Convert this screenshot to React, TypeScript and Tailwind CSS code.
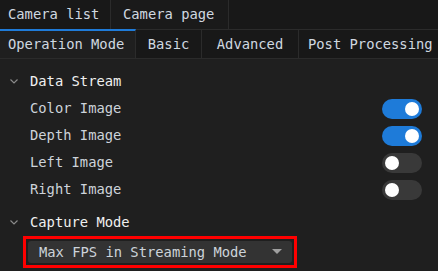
import type { JSX } from "react";

const font = { fontFamily: '"DejaVu Sans Mono", "Liberation Mono", monospace' };

const Toggle = ({ on }: { on: boolean }): JSX.Element => (
  <div
    className={`flex items-center w-[40px] h-[20px] rounded-full px-[3px] ${
      on ? "bg-[#1e7bd9] justify-end" : "bg-[#393939] justify-start"
    }`}
  >
    <div className="w-[14px] h-[14px] rounded-full bg-white" />
  </div>
);

const Chevron = (): JSX.Element => (
  <svg width="10" height="10" viewBox="0 0 10 10" className="text-[#8a8a8a]">
    <path d="M1.5 3.5 L5 7 L8.5 3.5" fill="none" stroke="currentColor" strokeWidth="1.2" />
  </svg>
);

const rows = [
  { label: "Color Image", on: true },
  { label: "Depth Image", on: true },
  { label: "Left Image", on: false },
  { label: "Right Image", on: false },
];

const App = (): JSX.Element => {
  return (
    <div className="w-[438px] h-[271px] bg-[#1f1f1f] text-[13.8px] overflow-hidden" style={font}>
      <div className="flex h-[30px] bg-[#181818] border-b border-[#2b2b2b]">
        <div className="flex items-center px-[8px] w-[111px] border-r border-[#2b2b2b] text-[#d0d8e0]">
          Camera list
        </div>
        <div className="flex items-center px-[12px] w-[118px] border-r border-[#2b2b2b] bg-[#1a1a1a] text-[#d0d8e0]">
          Camera page
        </div>
      </div>
      <div className="flex h-[29px] bg-[#181818] border-b border-[#2b2b2b]">
        <div className="flex items-center px-[8px] w-[136px] border-t-2 border-t-[#1f7bd8] border-r border-r-[#2b2b2b] bg-[#1f1f1f] text-[#d0d8e0] -mt-[1px]">
          Operation Mode
        </div>
        <div className="flex items-center justify-center w-[66px] border-r border-[#2b2b2b] text-[#d0d8e0]">
          Basic
        </div>
        <div className="flex items-center justify-center w-[97px] border-r border-[#2b2b2b] text-[#d0d8e0]">
          Advanced
        </div>
        <div className="flex items-center pl-[9px] flex-1 text-[#d0d8e0] whitespace-nowrap">
          Post Processing
        </div>
      </div>
      <div className="flex flex-col pt-[11px]">
        <div className="flex items-center h-[22px] pl-[9px] gap-[11px] text-[#f0f0f0]">
          <Chevron />
          <span>Data Stream</span>
        </div>
        <div className="flex flex-col pt-[3px]">
          {rows.map((r) => (
            <div key={r.label} className="flex items-center justify-between h-[27px] pl-[30px] pr-[16px] text-[#cdd3da]">
              <span>{r.label}</span>
              <Toggle on={r.on} />
            </div>
          ))}
        </div>
        <div className="flex items-center h-[22px] pl-[9px] gap-[11px] text-[#f0f0f0] mt-[8px]">
          <Chevron />
          <span>Capture Mode</span>
        </div>
        <div className="pl-[23px] pt-[3px]">
          <div className="w-[274px] h-[32px] border-[3px] border-[#ff0000] p-[2px]">
            <div className="flex items-center justify-between h-full rounded-[3px] bg-[#333333] pl-[11px] pr-[10px] text-[#cdd3da]">
              <span>Max FPS in Streaming Mode</span>
              <svg width="10" height="6" viewBox="0 0 10 6">
                <path d="M0 0 L10 0 L5 5 Z" fill="#a0a0a0" />
              </svg>
            </div>
          </div>
        </div>
      </div>
    </div>
  );
};

export default App;
